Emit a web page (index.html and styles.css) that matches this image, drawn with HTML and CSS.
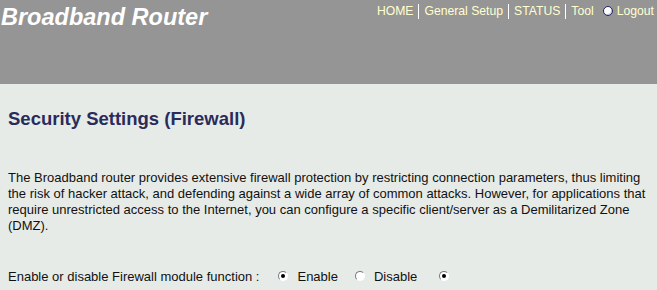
FILE: index.html
```html
<!DOCTYPE html>
<html>
<head>
<meta charset="utf-8">
<link rel="stylesheet" href="styles.css">
</head>
<body>
<div class="header">
  <div class="brand">Broadband Router</div>
  <div class="nav">
    <span class="nav-item">HOME</span><span class="sep"></span><span class="nav-item">General Setup</span><span class="sep"></span><span class="nav-item">STATUS</span><span class="sep"></span><span class="nav-item">Tool</span>
    <span class="logout-dot"></span><span class="nav-item">Logout</span>
  </div>
</div>
<div class="content">
  <h1 class="title">Security Settings (Firewall)</h1>
  <p class="desc">The Broadband router provides extensive firewall protection by restricting connection parameters, thus limiting the risk of hacker attack, and defending against a wide array of common attacks. However, for applications that require unrestricted access to the Internet, you can configure a specific client/server as a Demilitarized Zone (DMZ).</p>
  <div class="row">
    <span class="label">Enable or disable Firewall module function :</span>
    <span class="radio checked"></span><span class="opt">Enable</span>
    <span class="radio"></span><span class="opt opt-last">Disable</span>
    <span class="radio checked"></span>
  </div>
</div>
</body>
</html>
```
FILE: styles.css
```css
html, body {
  margin: 0;
  padding: 0;
  background: #e7ebe7;
  font-family: "Liberation Sans", Arial, sans-serif;
  overflow: hidden;
}
.header {
  background: #959595;
  height: 84px;
  display: flex;
  justify-content: space-between;
  align-items: flex-start;
}
.brand {
  color: #ffffff;
  font-weight: bold;
  font-style: italic;
  font-size: 23.5px;
  line-height: 26px;
  padding: 4px 0 0 1px;
}
.nav {
  display: flex;
  align-items: center;
  padding: 2px 3px 0 0;
  font-size: 12.2px;
  color: #ffffd0;
  height: 18px;
}
.nav-item {
  white-space: nowrap;
}
.sep {
  display: inline-block;
  width: 1px;
  height: 15px;
  background: #ffffff;
  margin: 0 5px;
}
.logout-dot {
  display: inline-block;
  width: 8px;
  height: 8px;
  border-radius: 50%;
  background: #ffffff;
  border: 1px solid #20205a;
  margin: 0 4px 0 9px;
  box-shadow: inset -1px -1px 0 #c8c8e8;
}
.content {
  padding: 0 8px;
}
.title {
  margin: 24px 0 0 0;
  font-size: 18.5px;
  line-height: 22px;
  font-weight: bold;
  color: #2b2b5b;
}
.desc {
  margin: 40px 0 0 0;
  font-size: 13px;
  line-height: 16px;
  color: #111111;
}
.row {
  margin-top: 34px;
  display: flex;
  align-items: center;
  font-size: 13px;
  color: #111111;
  height: 16px;
}
.label {
  margin-right: 19px;
}
.radio {
  display: inline-block;
  box-sizing: border-box;
  width: 10px;
  height: 10px;
  border-radius: 50%;
  border: 1px solid #777;
  border-right-color: #fff;
  border-bottom-color: #fff;
  background: #fff;
  position: relative;
  margin-right: 9px;
}
.radio.checked::after {
  content: "";
  position: absolute;
  left: 2px;
  top: 2px;
  width: 4px;
  height: 4px;
  border-radius: 50%;
  background: #000;
}
.opt {
  margin-right: 17px;
}
.opt-last {
  margin-right: 22px;
}
```
